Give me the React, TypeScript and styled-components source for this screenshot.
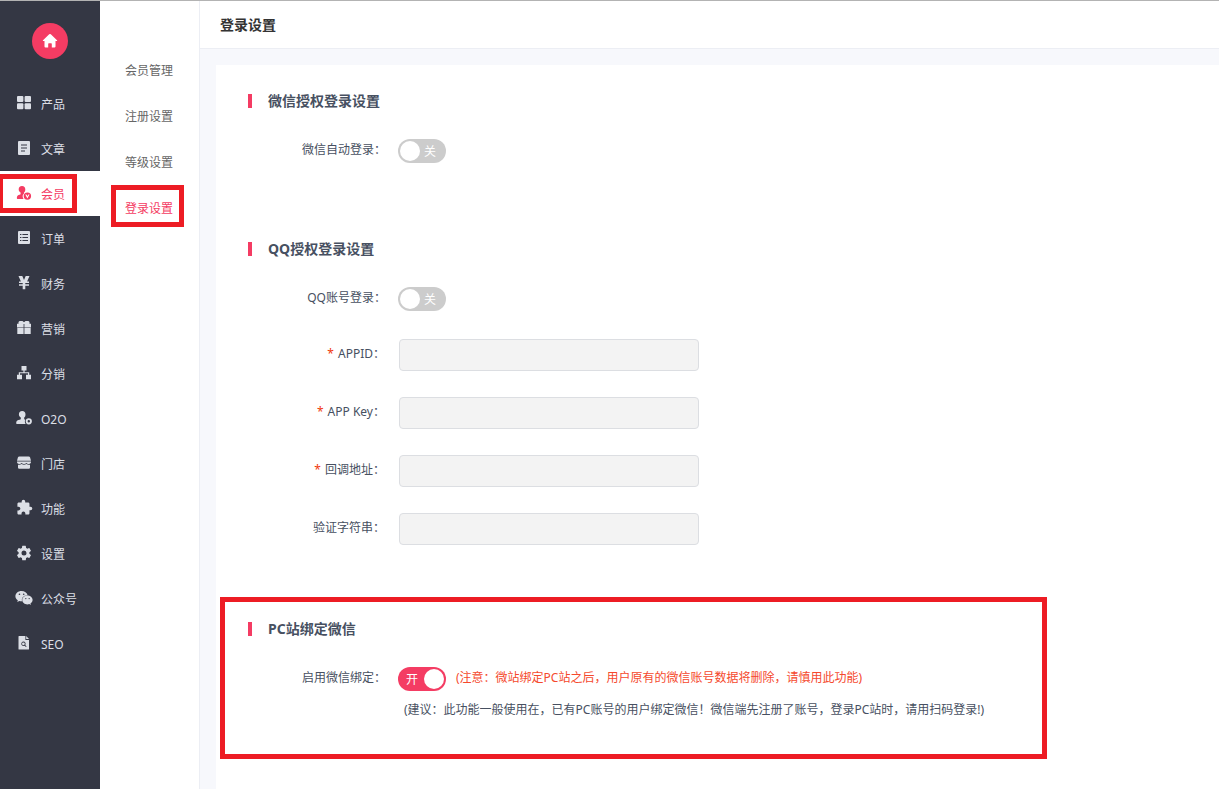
import React, { useState } from "react";
import styled, { createGlobalStyle } from "styled-components";
import { FaWeixin } from "react-icons/fa";
import { IoSettingsSharp } from "react-icons/io5";
import { MdExtension } from "react-icons/md";

const accent = "#f43c63";
const marker = "#ed1c24";

const GlobalStyle = createGlobalStyle`
  *, *::before, *::after { box-sizing: border-box; }
  body {
    margin: 0;
    background: #f7f8fc;
    color: #475061;
    font-family: "Noto Sans", "Noto Sans CJK SC", sans-serif;
    font-size: 12px;
    line-height: 20px;
  }
  ul { list-style: none; margin: 0; padding: 0; }
  a { color: inherit; text-decoration: none; }
`;

const Page = styled.div`
  display: flex;
  min-height: 100vh;
  border-top: 1px solid #b3b3b3;
`;

const MainNav = styled.nav`
  flex: none;
  width: 100px;
  background: #343744;
`;

const HomeArea = styled.div`
  display: flex;
  align-items: center;
  justify-content: center;
  height: 80px;
`;

const HomeLink = styled.a`
  display: flex;
  align-items: center;
  justify-content: center;
  width: 36px;
  height: 36px;
  border-radius: 50%;
  background: ${accent};
`;

const NavItem = styled.li<{ $active?: boolean }>`
  position: relative;
  background: ${(p) => (p.$active ? "#fff" : "transparent")};
  color: ${(p) => (p.$active ? accent : "#dcdfe6")};
`;

const NavLink = styled.a`
  display: flex;
  align-items: center;
  gap: 9px;
  height: 45px;
  padding: 2px 0 0 16px;
`;

const NavIcon = styled.span`
  display: flex;
  align-items: center;
  justify-content: center;
  width: 16px;
  height: 16px;
  margin-bottom: 4px;

  svg {
    flex: none;
  }
`;

const SubNav = styled.nav`
  flex: none;
  width: 100px;
  padding-top: 46px;
  background: #fff;
  border-right: 1px solid #eceef4;
`;

const SubItem = styled.li<{ $active?: boolean }>`
  position: relative;
  color: ${(p) => (p.$active ? accent : "#666")};
`;

const SubLink = styled.a`
  display: flex;
  align-items: center;
  height: 46px;
  padding: 2px 0 0 25px;
`;

const Marker = styled.span`
  position: absolute;
  border: 5px solid ${marker};
  pointer-events: none;
`;

const NavMarker = styled(Marker)`
  inset: 3px 23px 3px -2px;
`;

const SubMarker = styled(Marker)`
  inset: 0 15px 4px 11px;
`;

const SectionMarker = styled(Marker)`
  top: -22px;
  left: -28px;
  width: 827px;
  height: 162px;
`;

const Content = styled.div`
  flex: 1;
  min-width: 0;
  display: flex;
  flex-direction: column;
`;

const Header = styled.header`
  height: 48px;
  padding: 0 20px;
  background: #fff;
  border-bottom: 1px solid #eceef4;
`;

const Title = styled.h1`
  margin: 0;
  font-size: 14px;
  line-height: 48px;
  color: #333;
`;

const Panel = styled.main`
  flex: 1;
  margin: 16px 0 0 16px;
  padding: 26px 32px 0;
  background: #fff;
`;

const Section = styled.section`
  position: relative;
  padding-bottom: 48px;
`;

const SectionTitle = styled.h2`
  display: flex;
  align-items: center;
  gap: 16px;
  margin: 0 0 28px;
  font-size: 14px;
  line-height: 20px;

  &::before {
    content: "";
    width: 4px;
    height: 14px;
    background: ${accent};
  }
`;

const Row = styled.div<{ $gap: number }>`
  display: flex;
  align-items: center;
  margin-bottom: ${(p) => p.$gap}px;
`;

const FieldLabel = styled.label`
  flex: none;
  width: 138px;
  margin: 0 12px 2px 0;
  text-align: right;
`;

const InputLabel = styled(FieldLabel)`
  width: 137px;
  margin-right: 14px;
`;

const Required = styled.span`
  margin-right: 4px;
  color: #f03a0c;
`;

const TextInput = styled.input`
  width: 300px;
  height: 32px;
  padding: 0 8px;
  border: 1px solid #dcdee2;
  border-radius: 4px;
  background: #f3f3f3;
  color: inherit;
  font: inherit;
`;

const SwitchTrack = styled.label<{ $on: boolean }>`
  position: relative;
  display: flex;
  align-items: center;
  flex-direction: ${(p) => (p.$on ? "row-reverse" : "row")};
  justify-content: space-between;
  flex: none;
  width: 48px;
  height: 24px;
  padding: ${(p) => (p.$on ? "0 2px 0 8px" : "0 10px 0 2px")};
  border-radius: 12px;
  background: ${(p) => (p.$on ? accent : "#ccc")};
  color: #fff;
  cursor: pointer;
`;

const SwitchInput = styled.input`
  position: absolute;
  inset: 0;
  margin: 0;
  opacity: 0;
`;

const SwitchText = styled.span`
  padding-top: 2px;
`;

const Knob = styled.span`
  width: 20px;
  height: 20px;
  border-radius: 50%;
  background: #fff;
`;

const Warning = styled.span`
  margin: 0 0 2px 10px;
  color: #f5492d;
`;

const Hint = styled.p`
  margin: -19px 0 0 156px;
`;

const Glyph = ({ children }: { children: React.ReactNode }) => (
  <svg width="16" height="16" viewBox="0 0 16 16" fill="currentColor" aria-hidden="true">
    {children}
  </svg>
);

const icons = {
  grid: (
    <Glyph>
      <rect x="1" y="1" width="6.4" height="6" rx="1" />
      <rect x="8.6" y="1" width="6.4" height="6" rx="1" />
      <rect x="1" y="8.2" width="6.4" height="6" rx="1" />
      <rect x="8.6" y="8.2" width="6.4" height="6" rx="1" />
    </Glyph>
  ),
  article: (
    <Glyph>
      <path fillRule="evenodd" d="M3 1h10q1 0 1 1v12q0 1-1 1H3q-1 0-1-1V2q0-1 1-1zM5 4.500v1h6v-1zM5 7.500v1h6v-1zM5 10.500v1h4v-1z" />
    </Glyph>
  ),
  member: (
    <Glyph>
      <path d="M6 1c2.200 0 3.300 1.500 3.300 3.400 0 1.500-.6 2.500-1.300 3.200v.8c-1 .9-1.500 2-1.300 3.300.1.9.4 1.600.9 2.300H1.500C.6 14 .8 12 1.200 11.200c.6-1.100 2-1.400 3.400-2V7.600C3.500 6.900 2.700 5.800 2.700 4.400 2.700 2.500 3.800 1 6 1z" />
      <path fillRule="evenodd" d="M11.400 7.400a3.700 3.700 0 1 1 0 7.400 3.700 3.700 0 0 1 0-7.400zM9.300 9.600l2.100 3.800 2.100-3.800h-1.200l-.9 1.700-.9-1.700z" />
    </Glyph>
  ),
  order: (
    <Glyph>
      <path fillRule="evenodd" d="M3 1h10q1 0 1 1v11q0 1-1 1H3q-1 0-1-1V2q0-1 1-1zM4 4v1h1.400V4zM6.400 4v1H12V4zM4 7v1h1.400V7zM6.400 7v1H12V7zM4 10v1h1.400v-1zM6.400 10v1H12v-1z" />
    </Glyph>
  ),
  yen: (
    <Glyph>
      <path d="M2.500 1h3.800L8 5l1.700-4h3.800L11.100 6.400H13V8H9.300v1.200H13v1.600H9.300v3.400H6.700v-3.400H3V9.200h3.700V8H3V6.400h1.900z" />
    </Glyph>
  ),
  gift: (
    <Glyph>
      <path d="M2.500 3.800V2l1-1h3L8 2.200 9.500 1h3l1 1v1.800H15v3.600H8.400V4h-.8v3.400H1V3.800zM1.300 8.100h6.300V14H1.300zM8.400 8.100h6.300V14H8.400z" />
    </Glyph>
  ),
  tree: (
    <Glyph>
      <path d="M5.500 1h5v4.600H8.600v1.600h4.600v2.500H15v4.500h-5V9.700h2V8.300H4v1.400h2v4.500H1V9.700h1.800V7.200h4.600V5.600H5.500z" />
    </Glyph>
  ),
  o2o: (
    <Glyph>
      <path d="M6.200 1c2.200 0 3.300 1.500 3.300 3.400 0 1.500-.6 2.500-1.300 3.200v1.600l1.200.5c-.8 1.300-.7 3.100.3 4.300H.8C0 14 .1 11.900.6 11.200c.6-1 2.800-1.400 4.200-2V7.600C3.700 6.900 2.900 5.800 2.900 4.400 2.900 2.500 4 1 6.200 1z" />
      <path fillRule="evenodd" d="M12.800 8.200a3.100 3.100 0 1 1 0 6.200 3.100 3.100 0 0 1 0-6.200zM12.800 10.100a1.200 1.200 0 1 0 0 2.400 1.200 1.200 0 0 0 0-2.400z" />
    </Glyph>
  ),
  shop: (
    <Glyph>
      <path d="M3.400 1.600h9.200q1.200 0 1.500 1L15 5.800H1l.9-3.200q.3-1 1.500-1z" />
      <path d="M1 6.600h14q.2 2.400-2.300 2.400-1.600 0-2.300-1-1 1-2.400 1T5.600 8q-.7 1-2.300 1Q.8 9 1 6.600z" />
      <path d="M2 9.700q2 .4 3.600-.6 2.400 1.200 4.800 0 1.600 1 3.600.6v2.900q0 1.200-1.200 1.200H3.200Q2 13.800 2 12.600z" />
    </Glyph>
  ),
  seo: (
    <Glyph>
      <path fillRule="evenodd" d="M3 1h6.400v4H13v9q0 .6-.6.600H3.100q-.6 0-.6-.6V1.500Q2.500 1 3 1zM7.400 6.600a2.200 2.200 0 1 0 1.200 4.100l1.400 1.400.6-.6-1.400-1.400A2.200 2.200 0 0 0 7.400 6.600zM7.400 7.400a1.400 1.400 0 1 1 0 2.800 1.400 1.400 0 0 1 0-2.800z" />
      <path d="M10.200 1L13 4h-2.800z" />
    </Glyph>
  ),
};

const navItems = [
  { label: "产品", icon: icons.grid },
  { label: "文章", icon: icons.article },
  { label: "会员", icon: icons.member, active: true },
  { label: "订单", icon: icons.order },
  { label: "财务", icon: icons.yen },
  { label: "营销", icon: icons.gift },
  { label: "分销", icon: icons.tree },
  { label: "O2O", icon: icons.o2o },
  { label: "门店", icon: icons.shop },
  { label: "功能", icon: <MdExtension size={17} /> },
  { label: "设置", icon: <IoSettingsSharp size={16} /> },
  { label: "公众号", icon: <FaWeixin size={18} /> },
  { label: "SEO", icon: icons.seo },
];

const subItems = ["会员管理", "注册设置", "等级设置", "登录设置"];

const qqFields = [
  { id: "appid", label: "APPID：", required: true },
  { id: "appkey", label: "APP Key：", required: true },
  { id: "callback", label: "回调地址：", required: true },
  { id: "verify", label: "验证字符串：", required: false },
];

function Switch({ id, initial = false }: { id: string; initial?: boolean }) {
  const [on, setOn] = useState(initial);
  return (
    <SwitchTrack $on={on}>
      <SwitchInput id={id} type="checkbox" role="switch" checked={on} onChange={(e) => setOn(e.target.checked)} />
      <Knob />
      <SwitchText>{on ? "开" : "关"}</SwitchText>
    </SwitchTrack>
  );
}

export default function App() {
  return (
    <>
      <GlobalStyle />
      <Page>
        <MainNav>
          <HomeArea>
            <HomeLink href="#" aria-label="首页">
              <svg width="16" height="16" viewBox="0 0 16 16" fill="#fff" aria-hidden="true">
                <path d="M7.200 1.300q.8-.7 1.600 0l6.200 5.900q.6.800-.3.900h-1.200v5.300q0 1-1 1H9.800v-3.500q0-.6-.6-.6H6.800q-.6 0-.6.6v3.500H3.500q-1 0-1-1V8.100H1.300Q.4 8 1 7.200z" />
              </svg>
            </HomeLink>
          </HomeArea>
          <ul>
            {navItems.map((item) => (
              <NavItem key={item.label} $active={item.active}>
                <NavLink href="#">
                  <NavIcon>{item.icon}</NavIcon>
                  {item.label}
                </NavLink>
                {item.active && <NavMarker />}
              </NavItem>
            ))}
          </ul>
        </MainNav>
        <SubNav>
          <ul>
            {subItems.map((label) => (
              <SubItem key={label} $active={label === "登录设置"}>
                <SubLink href="#">{label}</SubLink>
                {label === "登录设置" && <SubMarker />}
              </SubItem>
            ))}
          </ul>
        </SubNav>
        <Content>
          <Header>
            <Title>登录设置</Title>
          </Header>
          <Panel>
            <Section>
              <SectionTitle>微信授权登录设置</SectionTitle>
              <Row $gap={28}>
                <FieldLabel htmlFor="wechat-login">微信自动登录：</FieldLabel>
                <Switch id="wechat-login" />
              </Row>
            </Section>
            <Section>
              <SectionTitle>QQ授权登录设置</SectionTitle>
              <Row $gap={28}>
                <FieldLabel htmlFor="qq-login">QQ账号登录：</FieldLabel>
                <Switch id="qq-login" />
              </Row>
              {qqFields.map((f) => (
                <Row key={f.id} $gap={26}>
                  <InputLabel htmlFor={f.id}>
                    {f.required && <Required>*</Required>}
                    {f.label}
                  </InputLabel>
                  <TextInput id={f.id} type="text" disabled />
                </Row>
              ))}
            </Section>
            <Section>
              <SectionTitle>PC站绑定微信</SectionTitle>
              <Row $gap={28}>
                <FieldLabel htmlFor="bind-wechat">启用微信绑定：</FieldLabel>
                <Switch id="bind-wechat" initial />
                <Warning>(注意：微站绑定PC站之后，用户原有的微信账号数据将删除，请慎用此功能)</Warning>
              </Row>
              <Hint>(建议：此功能一般使用在，已有PC账号的用户绑定微信！微信端先注册了账号，登录PC站时，请用扫码登录!)</Hint>
              <SectionMarker />
            </Section>
          </Panel>
        </Content>
      </Page>
    </>
  );
}
